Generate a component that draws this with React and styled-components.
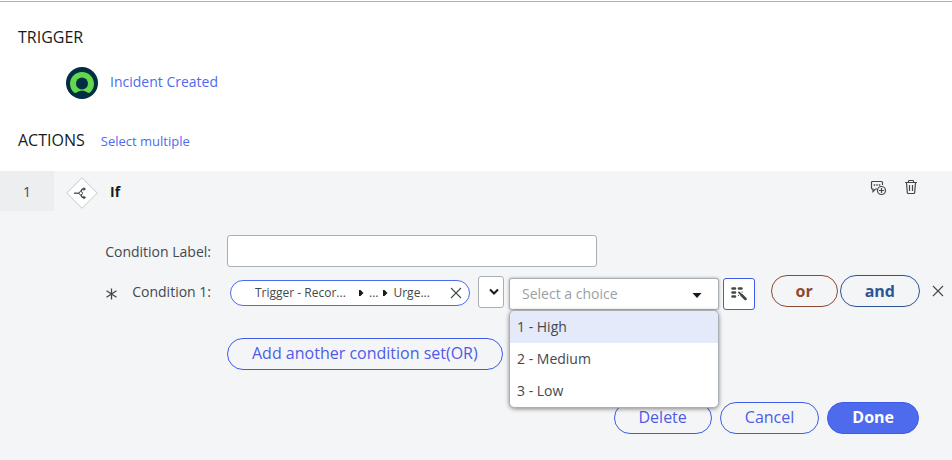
import React, { useState } from "react";
import styled, { createGlobalStyle } from "styled-components";

const GlobalStyle = createGlobalStyle`
  * {
    box-sizing: border-box;
  }

  body {
    margin: 0;
    background-color: white;
    color: #42494d;
    font-family: "Open Sans", "Noto Sans", sans-serif;
    font-size: 14px;
    line-height: 20px;
  }

  button, input, select {
    font-family: inherit;
  }
`;

const Page = styled.main`
  border-top: 1px solid #a5b0b0;
  margin-top: 1px;
`;

const SectionHead = styled.div`
  display: flex;
  align-items: baseline;
  gap: 16px;
  padding: 0 18px;
`;

const Title = styled.h2`
  margin: 0;
  color: #161b1c;
  font-size: 16px;
  font-weight: 500;
  line-height: 24px;
`;

const Trigger = styled.section`
  padding: 23px 0 29px;
`;

const TriggerRow = styled.div`
  display: flex;
  align-items: center;
  gap: 12px;
  padding: 18px 66px 0;
`;

const TextLink = styled.a`
  padding-bottom: 2px;
  color: #4f6bed;
  font-size: ${(props) => (props.$small ? "13px" : "14px")};
  text-decoration: none;
`;

const Step = styled.section`
  margin-top: 18px;
  padding-bottom: 26px;
  background-color: #f4f5f7;
`;

const StepHead = styled.header`
  display: flex;
  align-items: flex-start;
  gap: 12px;
  padding-right: 33px;
`;

const StepNumber = styled.div`
  width: 54px;
  height: 40px;
  background-color: #edeef0;
  line-height: 42px;
  text-align: center;
`;

const StepName = styled.h3`
  flex: 1;
  margin: 0;
  color: #161b1c;
  font-size: 14px;
  font-weight: 700;
  line-height: 42px;
`;

const StepIcon = styled.svg`
  margin-top: 6px;
`;

const HeadTools = styled.div`
  display: flex;
  gap: 16px;
  padding-top: 8px;
`;

const PlainButton = styled.button`
  display: flex;
  padding: 0;
  border: 0;
  background: none;
  color: #42494d;
`;

const FieldRow = styled.div`
  display: flex;
  align-items: center;
  height: 40px;
  padding-right: 8px;
`;

const Fields = styled.div`
  padding-top: 18px;
`;

const Label = styled.label`
  display: flex;
  justify-content: flex-end;
  gap: 15px;
  width: 227px;
  padding: 2px 16px 0 0;
  line-height: 22px;
`;

const TextInput = styled.input`
  width: 370px;
  height: 32px;
  padding: 0 12px;
  border: 1px solid #a9b0b5;
  border-radius: 3px;
  background-color: white;
`;

const Pill = styled.div`
  display: flex;
  align-items: center;
  width: 240px;
  height: 26px;
  margin: 4px 8px 0 3px;
  padding: 0 7px 0 24px;
  border: 1px solid #4f6bed;
  border-radius: 13px;
  background-color: white;
  font-size: 12px;
`;

const PillPath = styled.span`
  display: flex;
  flex: 1;
  align-items: center;
  gap: 5px;
`;

const PillRoot = styled.span`
  width: 99px;
`;

const SelectBox = styled.div`
  position: relative;
  width: ${(props) => (props.$compact ? "26px" : "210px")};
  margin-right: ${(props) => (props.$compact ? "5px" : "4px")};
  margin-top: ${(props) => (props.$compact ? "2px" : "6px")};
`;

const Select = styled.select`
  display: block;
  width: 100%;
  height: 32px;
  padding: 0 12px 2px;
  appearance: none;
  border: 1px solid #a9b0b5;
  border-radius: 3px;
  background-color: white;
  color: #9a9fa3;
  font-size: 14px;
  box-shadow: ${(props) => (props.$open ? "0 0 3px rgb(0, 0, 0, 0.35)" : "none")};
`;

const Arrow = styled.svg`
  position: absolute;
  top: ${(props) => (props.$compact ? "12px" : "15px")};
  right: ${(props) => (props.$compact ? "5px" : "17px")};
  pointer-events: none;
`;

const Menu = styled.ul`
  position: absolute;
  z-index: 1;
  top: 100%;
  left: 0;
  width: 100%;
  margin: 0;
  padding: 0;
  overflow: hidden;
  list-style: none;
  border: 1px solid #a9b0b5;
  border-radius: 6px;
  background-color: white;
  box-shadow: 0 1px 4px rgb(0, 0, 0, 0.45);
`;

const MenuItem = styled.li`
  padding: 0 7px;
  background-color: ${(props) => (props.$active ? "#e5eafb" : "white")};
  line-height: 32px;
`;

const ScriptButton = styled.button`
  display: flex;
  align-items: center;
  justify-content: center;
  width: 32px;
  height: 32px;
  margin-top: 6px;
  padding: 0;
  border: 1px solid #3f5be8;
  border-radius: 3px;
  background-color: white;
`;

const JoinGroup = styled.div`
  display: flex;
  align-items: center;
  gap: 2px;
  margin: 0 12px 0 auto;
`;

const RoundButton = styled.button`
  height: 32px;
  padding: ${(props) => (props.$color ? "0 24px" : "0 24px 2px")};
  border: 1px solid ${(props) => props.$color || "#3f5be8"};
  border-radius: 16px;
  background-color: ${(props) => (props.$filled ? "#4f6bed" : "transparent")};
  color: ${(props) => (props.$filled ? "white" : props.$color || "#4f5be8")};
  font-size: 16px;
  font-weight: ${(props) => (props.$filled || props.$color ? 700 : 400)};
  line-height: 28px;
`;

const AddRow = styled.div`
  padding: 27px 0 0 227px;
`;

const Footer = styled.footer`
  display: flex;
  justify-content: flex-end;
  gap: 8px;
  padding: 32px 33px 0 0;
`;

const CloseIcon = () => (
  <svg width="12" height="12" viewBox="0 0 12 12" fill="none" stroke="#42494d" strokeWidth="1.1">
    <path d="M1 1 11 11M11 1 1 11" />
  </svg>
);

const PathArrow = () => (
  <svg width="5" height="6" viewBox="0 0 5 6">
    <path d="M0 0H1.5L4.5 3 1.5 6H0Z" fill="#161b1c" />
  </svg>
);

const choices = ["1 - High", "2 - Medium", "3 - Low"];

const App = () => {
  const [label, setLabel] = useState("");
  const [choice, setChoice] = useState("");
  const [active, setActive] = useState(0);

  return (
    <Page>
      <GlobalStyle />
      <Trigger>
        <SectionHead>
          <Title>TRIGGER</Title>
        </SectionHead>
        <TriggerRow>
          <svg width="32" height="32" viewBox="0 0 32 32">
            <circle cx="16" cy="16" r="16" fill="#032d42" />
            <path
              d="M16 5C9.2 5 4 10.3 4 16.8 4 20.2 5.5 23.2 7.7 25.3 8.5 26 9.7 26.1 10.6 25.5 12.3 24.3 14 23.7 16 23.7S19.7 24.3 21.4 25.5C22.3 26.1 23.5 26 24.3 25.3 26.5 23.2 28 20.2 28 16.8 28 10.3 22.8 5 16 5Z"
              fill="#62d84e"
            />
            <circle cx="16" cy="16.5" r="6" fill="#032d42" />
          </svg>
          <TextLink href="#trigger">Incident Created</TextLink>
        </TriggerRow>
      </Trigger>

      <SectionHead>
        <Title>ACTIONS</Title>
        <TextLink href="#select" $small>Select multiple</TextLink>
      </SectionHead>

      <Step>
        <StepHead>
          <StepNumber>1</StepNumber>
          <StepIcon width="32" height="32" viewBox="0 0 32 32" fill="none" stroke="#42494d">
            <path d="M16 .7 31.3 16 16 31.3.7 16Z" fill="white" stroke="#c3c7ca" />
            <path d="M8 16.2H13" strokeWidth="1.3" />
            <path d="M18 12H17.2C15.8 12 15.3 13 15 14.5M15 17.9C15.3 19.5 15.8 20.5 17.2 20.5H18" strokeWidth="1.3" />
            <circle cx="14.8" cy="16.2" r="1.7" fill="white" />
            <path d="M17.5 10 20 12 17.5 14ZM17.5 18.5 20 20.5 17.5 22.5Z" fill="#42494d" stroke="none" />
          </StepIcon>
          <StepName>If</StepName>
          <HeadTools>
            <PlainButton aria-label="Add annotation">
              <svg width="17" height="17" viewBox="0 0 17 17" fill="none" stroke="#42494d" strokeWidth="1.2">
                <path d="M7 10H5.5L3 12.5V10H2.5A1 1 0 0 1 1.5 9V3.5A1 1 0 0 1 2.5 2.5H11.5A1 1 0 0 1 12.5 3.5V6" />
                <path d="M3.7 6H5.2M6.3 6H7.7M8.8 6H10.3" strokeWidth="1.7" />
                <circle cx="11.5" cy="11.5" r="4" />
                <path d="M11.5 9V14M9 11.5H14" />
              </svg>
            </PlainButton>
            <PlainButton aria-label="Delete action">
              <svg width="16" height="16" viewBox="0 0 16 16" fill="none" stroke="#42494d" strokeWidth="1.2">
                <path d="M2 3.5H14M5.5 3.5V2.2A.7.7 0 0 1 6.2 1.5H9.8A.7.7 0 0 1 10.5 2.2V3.5M3.5 3.5 4.3 13.5A1 1 0 0 0 5.3 14.5H10.7A1 1 0 0 0 11.7 13.5L12.5 3.5M6.5 6V12M9.5 6V12" />
              </svg>
            </PlainButton>
          </HeadTools>
        </StepHead>

        <Fields>
          <FieldRow>
            <Label htmlFor="label">Condition Label:</Label>
            <TextInput id="label" value={label} onChange={(e) => setLabel(e.target.value)} />
          </FieldRow>
          <FieldRow>
            <Label htmlFor="choice">
              <svg width="12" height="22" viewBox="0 0 12 22" fill="none" stroke="#42494d" strokeWidth="1.3">
                <path d="M6.5 7.5V18.5M1.5 9.7 11.5 16.3M11.5 9.7 1.5 16.3" />
              </svg>
              Condition 1:
            </Label>
            <Pill>
              <PillPath>
                <PillRoot>Trigger - Recor...</PillRoot>
                <PathArrow />
                <span>...</span>
                <PathArrow />
                <span>Urge...</span>
              </PillPath>
              <PlainButton aria-label="Remove value">
                <CloseIcon />
              </PlainButton>
            </Pill>
            <SelectBox $compact>
              <Select aria-label="Operator" />
              <Arrow $compact width="10" height="8" viewBox="0 0 10 8" fill="none" stroke="#161b1c" strokeWidth="2">
                <path d="M1 1.5 5 5.5 9 1.5" />
              </Arrow>
            </SelectBox>
            <SelectBox>
              <Select id="choice" $open value={choice} onChange={(e) => setChoice(e.target.value)}>
                <option value="">Select a choice</option>
                {choices.map((item) => (
                  <option key={item}>{item}</option>
                ))}
              </Select>
              <Arrow width="10" height="5" viewBox="0 0 10 5">
                <path d="M.5 0H9.5L5 5Z" fill="#161b1c" />
              </Arrow>
              <Menu role="listbox">
                {choices.map((item, i) => (
                  <MenuItem
                    key={item}
                    role="option"
                    aria-selected={i === active}
                    $active={i === active}
                    onMouseEnter={() => setActive(i)}
                    onClick={() => setChoice(item)}
                  >
                    {item}
                  </MenuItem>
                ))}
              </Menu>
            </SelectBox>
            <ScriptButton aria-label="Toggle scripting">
              <svg width="18" height="16" viewBox="0 0 18 16" fill="none" stroke="#42494d" strokeLinecap="round">
                <path d="M2.5 2.5H5M9 2.5H11.5M2.5 6.5H5M2.5 10.5H5" strokeWidth="2.6" />
                <path d="M9 6.5 10.5 8" strokeWidth="1.8" />
                <path d="M11.5 9 15.5 13" strokeWidth="2.8" />
                <path d="M12 6H12.3M8.3 9.5H8.5" strokeWidth="1" />
              </svg>
            </ScriptButton>
            <JoinGroup>
              <RoundButton $color="#8b4a2f">or</RoundButton>
              <RoundButton $color="#2d5596">and</RoundButton>
            </JoinGroup>
            <PlainButton aria-label="Remove condition">
              <CloseIcon />
            </PlainButton>
          </FieldRow>
        </Fields>

        <AddRow>
          <RoundButton>Add another condition set(OR)</RoundButton>
        </AddRow>
        <Footer>
          <RoundButton>Delete</RoundButton>
          <RoundButton>Cancel</RoundButton>
          <RoundButton $filled>Done</RoundButton>
        </Footer>
      </Step>
    </Page>
  );
};

export default App;
